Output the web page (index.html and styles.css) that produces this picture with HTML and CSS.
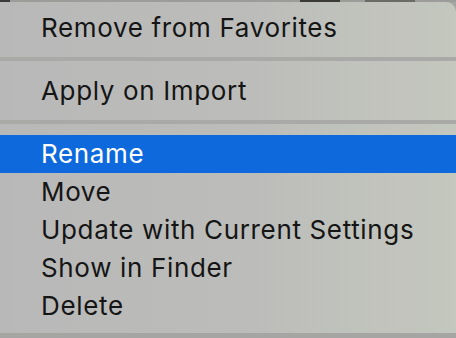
FILE: index.html
```html
<!DOCTYPE html>
<html>
    <head>
        <meta charset="UTF-8">
        <title>Preset menu</title>
        <link rel="stylesheet" href="styles.css">
    </head>
    <body>
        <div class="backdrop">
            <span class="blot b1"></span>
            <span class="blot b2"></span>
            <span class="blot b3"></span>
        </div>
        <div class="menu">
            <div class="item">Remove from Favorites</div>
            <div class="sep"></div>
            <div class="item">Apply on Import</div>
            <div class="sep"></div>
            <div class="item active">Rename</div>
            <div class="item">Move</div>
            <div class="item">Update with Current Settings</div>
            <div class="item">Show in Finder</div>
            <div class="item">Delete</div>
        </div>
        <div class="floor"></div>
    </body>
</html>
```
FILE: styles.css
```css
html, body{
    margin:0;
    padding:0;
    width:456px;
    height:338px;
    overflow:hidden;
    background:#a5a6a3;
}
body{
    font-family:"Inter", "Liberation Sans", sans-serif;
}
.backdrop{
    height:2px;
    background:#9c9c9a;
    position:relative;
}
.blot{
    position:absolute;
    top:0;
    height:2px;
    background:#3a3a38;
}
.b1{ left:0; width:10px; }
.b2{ left:300px; width:40px; }
.b3{ left:365px; width:50px; background:#6a6a66; }
.menu{
    height:331px;
    box-sizing:border-box;
    padding-top:7px;
    border-top-right-radius:10px;
    background:linear-gradient(90deg, #b8b8b8 0%, #bcbdba 55%, #c4c7be 100%);
}
.item{
    height:38px;
    line-height:38px;
    padding-left:41px;
    font-size:26px;
    letter-spacing:0.65px;
    color:#151515;
    white-space:nowrap;
}
.item.active{
    background:#0e6adc;
    color:#fff;
}
.sep{
    height:4px;
    margin:10px 0 11px;
    background:#a9aaa8;
}
.floor{
    height:5px;
}
```
